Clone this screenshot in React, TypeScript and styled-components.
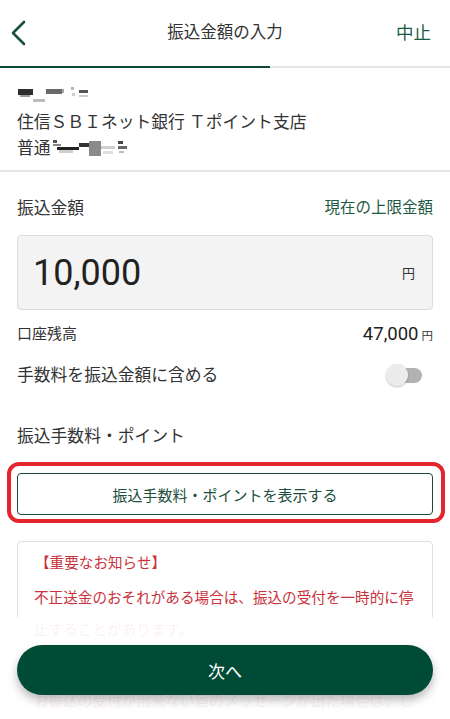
import React from "react";
import styled, { createGlobalStyle } from "styled-components";

const GREEN = "#00503a";
const TEXT = "#333333";
const RED = "#c8323c";

const Global = createGlobalStyle`
  html, body { margin: 0; padding: 0; background: #ffffff; }
  body {
    font-family: Roboto, "Noto Sans CJK JP", sans-serif;
    color: ${TEXT};
    overflow: hidden;
  }
  * { box-sizing: border-box; }
`;

const Page = styled.div`
  width: 450px;
  height: 719px;
  overflow: hidden;
  position: relative;
  background: #fff;
`;

const Header = styled.header`
  display: grid;
  grid-template-columns: 1fr auto 1fr;
  align-items: center;
  height: 66px;
`;

const BackButton = styled.button`
  justify-self: start;
  display: flex;
  align-items: center;
  background: none;
  border: none;
  padding: 0 0 0 10px;
  height: 44px;
  cursor: pointer;
`;

const Title = styled.h1`
  margin: 0;
  font-size: 16.5px;
  font-weight: 400;
  color: ${TEXT};
  line-height: 24px;
`;

const CancelLink = styled.a`
  justify-self: end;
  padding-right: 19px;
  font-size: 17.5px;
  color: #1f5a45;
  line-height: 24px;
  text-decoration: none;
`;

const Progress = styled.div`
  height: 2px;
  background: #e6e6e6;
  display: flex;
`;

const ProgressFill = styled.div`
  height: 2px;
  background: #0f4a37;
`;

const Account = styled.section`
  padding: 14px 17px 10px;
  border-bottom: 2px solid #e7e7e7;
`;

const AccountLine = styled.div`
  display: flex;
  align-items: center;
  height: 26px;
  font-size: 16.8px;
  color: ${TEXT};
`;

const Content = styled.main`
  padding: 0 17px;
`;

const Row = styled.div<{ $mt: number; $h?: number }>`
  display: flex;
  align-items: center;
  justify-content: space-between;
  margin-top: ${(p) => p.$mt}px;
  height: ${(p) => p.$h ?? 24}px;
`;

const Label = styled.span<{ $size?: number }>`
  font-size: ${(p) => p.$size ?? 16.8}px;
  color: ${TEXT};
  line-height: 24px;
`;

const LinkText = styled.a`
  font-size: 15.5px;
  color: #1f5a45;
  text-decoration: none;
  line-height: 24px;
`;

const AmountBox = styled.div`
  margin-top: 15px;
  height: 75px;
  background: #f3f3f3;
  border: 1px solid #dcdcdc;
  border-radius: 4px;
  display: flex;
  align-items: center;
  justify-content: space-between;
  padding: 0 17px 0 15px;
`;

const AmountValue = styled.span`
  font-family: Roboto, sans-serif;
  font-size: 36px;
  color: #222;
  line-height: 40px;
`;

const Yen = styled.span<{ $size: number }>`
  font-size: ${(p) => p.$size}px;
  color: ${TEXT};
`;

const Balance = styled.span`
  display: flex;
  align-items: baseline;
  gap: 3px;
`;

const BalanceValue = styled.span`
  font-family: Roboto, sans-serif;
  font-size: 18.5px;
  color: #222;
`;

const Switch = styled.span`
  position: relative;
  display: inline-block;
  width: 36px;
  height: 22px;
  margin-right: 11px;
`;

const Track = styled.span`
  position: absolute;
  left: 2px;
  top: 4px;
  width: 34px;
  height: 15px;
  border-radius: 8px;
  background: #b2b2b2;
`;

const Thumb = styled.span`
  position: absolute;
  left: 0;
  top: 0;
  width: 22px;
  height: 22px;
  border-radius: 50%;
  background: #ececec;
  box-shadow: 0 1px 2px rgba(0, 0, 0, 0.25);
`;

const Highlight = styled.div`
  margin: 14px -12px 0 -10px;
  border: 4px solid #e4252d;
  border-radius: 12px;
  padding: 7px 8px 4px 6px;
`;

const OutlineButton = styled.button`
  width: 100%;
  height: 42px;
  background: #fff;
  border: 1px solid #1b4a3a;
  border-radius: 4px;
  font-family: Roboto, "Noto Sans CJK JP", sans-serif;
  font-size: 15px;
  color: #1d4e3c;
  cursor: pointer;
`;

const Notice = styled.section`
  margin-top: 18px;
  border: 1px solid #dedede;
  border-radius: 4px;
  padding: 5px 17px 20px 17px;
  color: ${RED};
  font-size: 14.6px;
`;

const NoticeTitle = styled.div`
  line-height: 32px;
`;

const NoticePara = styled.p<{ $mt: number }>`
  margin: ${(p) => p.$mt}px 0 0 -1px;
  line-height: 32px;
`;

const Footer = styled.footer`
  position: absolute;
  left: 0;
  right: 0;
  bottom: 0;
  height: 102px;
  background: rgba(255, 255, 255, 0.93);
  padding: 28px 17px 0;
`;

const PrimaryButton = styled.button`
  width: 100%;
  height: 50px;
  border: none;
  border-radius: 25px;
  background: #004b35;
  color: #fff;
  font-family: Roboto, "Noto Sans CJK JP", sans-serif;
  font-size: 17px;
  box-shadow: 0 5px 10px rgba(0, 0, 0, 0.28);
  cursor: pointer;
`;

const Chevron = () => (
  <svg width="18" height="26" viewBox="0 0 18 26">
    <polyline
      points="14,2 3,13 14,24"
      fill="none"
      stroke="#17513c"
      strokeWidth="2.6"
      strokeLinecap="round"
      strokeLinejoin="round"
    />
  </svg>
);

const NameMosaic = () => (
  <svg width="75" height="20" viewBox="0 0 75 20">
    <rect x="1" y="4" width="15" height="6" fill="#2e2e2e" />
    <rect x="3" y="10" width="10" height="2" fill="#9a9a9a" />
    <rect x="16" y="14" width="12" height="3" fill="#bcbcbc" />
    <rect x="29" y="4" width="16" height="5" fill="#6a6a6a" />
    <rect x="45" y="4" width="2" height="4" fill="#a5a5a5" />
    <rect x="54" y="2" width="3" height="3" fill="#b5b5b5" />
    <rect x="55" y="8" width="3" height="3" fill="#cfcfcf" />
    <rect x="62" y="5" width="9" height="3" fill="#555" />
    <rect x="62" y="10" width="9" height="2" fill="#cccccc" />
  </svg>
);

const NumberMosaic = () => (
  <svg width="80" height="20" viewBox="0 0 80 20">
    <rect x="2" y="3" width="4" height="3" fill="#555" />
    <rect x="2" y="7" width="8" height="2" fill="#888" />
    <rect x="6" y="10" width="22" height="3" fill="#222" />
    <rect x="8" y="13" width="14" height="3" fill="#cfcfcf" />
    <rect x="28" y="6" width="10" height="4" fill="#333" />
    <rect x="38" y="4" width="12" height="15" fill="#8a8a8a" />
    <rect x="50" y="9" width="14" height="3" fill="#d0d0d0" />
    <rect x="52" y="14" width="10" height="3" fill="#e0e0e0" />
    <rect x="67" y="4" width="5" height="3" fill="#444" />
    <rect x="67" y="9" width="9" height="3" fill="#666" />
    <rect x="68" y="14" width="5" height="2" fill="#bbb" />
  </svg>
);

export default function App() {
  const progress = 60;
  return (
    <Page>
      <Global />
      <Header>
        <BackButton aria-label="戻る">
          <Chevron />
        </BackButton>
        <Title>振込金額の入力</Title>
        <CancelLink>中止</CancelLink>
      </Header>
      <Progress>
        <ProgressFill style={{ width: `${progress}%` }} />
      </Progress>

      <Account>
        <AccountLine>
          <NameMosaic />
        </AccountLine>
        <AccountLine>住信ＳＢＩネット銀行 Ｔポイント支店</AccountLine>
        <AccountLine>
          普通
          <NumberMosaic />
        </AccountLine>
      </Account>

      <Content>
        <Row $mt={24}>
          <Label>振込金額</Label>
          <LinkText>現在の上限金額</LinkText>
        </Row>
        <AmountBox>
          <AmountValue>10,000</AmountValue>
          <Yen $size={13}>円</Yen>
        </AmountBox>
        <Row $mt={12}>
          <Label $size={15}>口座残高</Label>
          <Balance>
            <BalanceValue>47,000</BalanceValue>
            <Yen $size={11.5}>円</Yen>
          </Balance>
        </Row>
        <Row $mt={17}>
          <Label>手数料を振込金額に含める</Label>
          <Switch>
            <Track />
            <Thumb />
          </Switch>
        </Row>
        <Row $mt={37}>
          <Label>振込手数料・ポイント</Label>
        </Row>
        <Highlight>
          <OutlineButton>振込手数料・ポイントを表示する</OutlineButton>
        </Highlight>
        <Notice>
          <NoticeTitle>【重要なお知らせ】</NoticeTitle>
          <NoticePara $mt={3}>
            不正送金のおそれがある場合は、振込の受付を一時的に停止することがあります。
          </NoticePara>
          <NoticePara $mt={39}>
            お振込の受付が出来ない旨のメッセージが出た場合は、しばらく時間をおいてから再度お試しください。
          </NoticePara>
        </Notice>
      </Content>

      <Footer>
        <PrimaryButton>次へ</PrimaryButton>
      </Footer>
    </Page>
  );
}
